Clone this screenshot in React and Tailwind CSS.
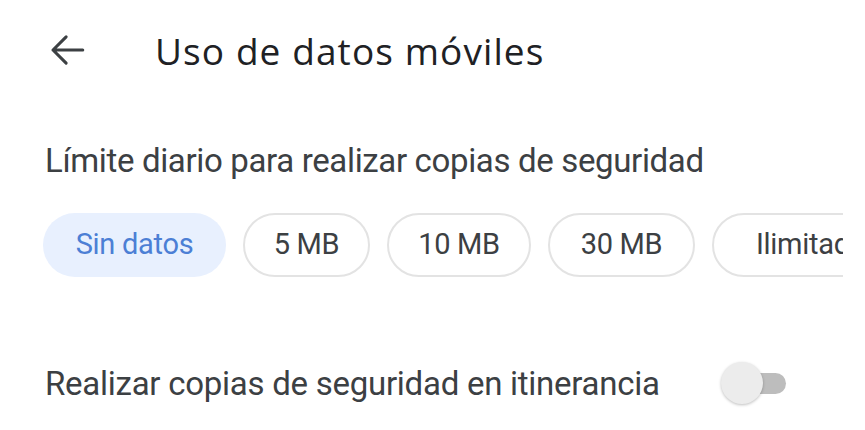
export default function App() {
  const chips = ["5 MB", "10 MB", "30 MB", "Ilimitado"];
  const widths = ["w-[127px]", "w-[144px]", "w-[147px]", "w-[198px]"];
  return (
    <div className="w-[865px] h-[430px] bg-white overflow-hidden" style={{ fontFamily: "Roboto, 'Liberation Sans', sans-serif" }}>
      <div className="flex items-center h-[48px] mt-[26px] pl-[46px]">
        <svg width="42" height="42" viewBox="0 0 24 24" className="text-[#3c4043] shrink-0">
          <path d="M21 12H4M11.5 4.5 4 12l7.5 7.5" fill="none" stroke="currentColor" strokeWidth="1.75" strokeLinecap="round" strokeLinejoin="round" />
        </svg>
        <div className="ml-[67px] text-[37px] text-[#202124] leading-none tracking-[1.1px]" style={{ fontFamily: "'Open Sans', Roboto, sans-serif" }}>Uso de datos móviles</div>
      </div>
      <div className="pl-[45px] mt-[70px] text-[33px] text-[#3c4043] leading-none tracking-[-0.35px]">Límite diario para realizar copias de seguridad</div>
      <div className="w-[843px] overflow-hidden mt-[36px]">
        <div className="flex gap-[17px] pl-[43px] whitespace-nowrap">
          <div className="h-[64px] w-[183px] shrink-0 rounded-full bg-[#e8f0fe] flex items-center justify-center text-[29px] text-[#4c7fd5] tracking-[-0.3px]">Sin datos</div>
          {chips.map((c, i) => (
            <div key={c} className={"h-[64px] shrink-0 rounded-full border-2 border-[#e3e3e3] flex items-center justify-center text-[29px] text-[#3c4043] tracking-[-0.3px] " + widths[i]}>{c}</div>
          ))}
        </div>
      </div>
      <div className="flex items-center pl-[45px] mt-[85px] h-[42px]">
        <div className="text-[33px] text-[#3c4043] leading-none tracking-[-0.26px] w-[676px] shrink-0">Realizar copias de seguridad en itinerancia</div>
        <div className="relative w-[66px] h-[42px] flex items-center">
          <div className="absolute left-[14px] w-[51px] h-[21px] rounded-full bg-[#bdbdbd]" />
          <div className="absolute left-0 w-[42px] h-[42px] rounded-full bg-[#ececec] shadow-[0_1px_3px_rgba(0,0,0,0.25)]" />
        </div>
      </div>
    </div>
  );
}
